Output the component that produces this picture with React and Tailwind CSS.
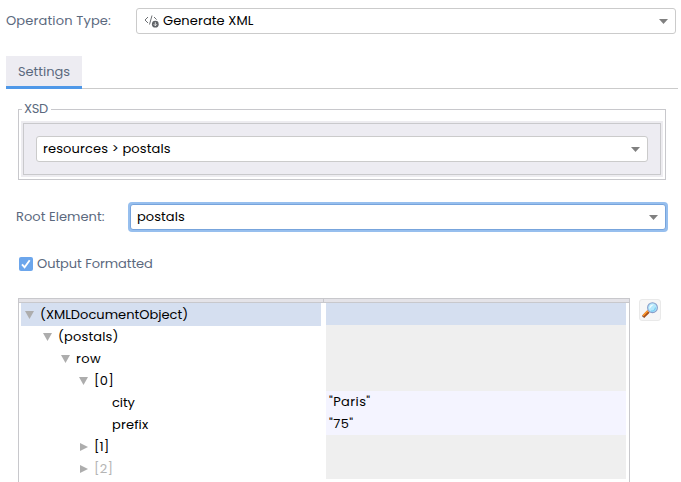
import React from 'react';

function Caret() {
  return (
    <svg className="mr-[7px] h-[5px] w-[9px] shrink-0" viewBox="0 0 9 5">
      <path d="M0 0h9L4.5 5z" fill="#808080" />
    </svg>
  );
}

function Combo({ className, children }) {
  return (
    <div className={'flex items-center justify-between rounded-[3px] border bg-white text-black ' + className}>
      <div className="flex items-center">{children}</div>
      <Caret />
    </div>
  );
}

function Arrow({ open }) {
  return (
    <svg className="mt-[2px] mr-[6px] h-[8px] w-[9px] shrink-0" viewBox="0 0 9 8">
      <path d={open ? 'M0 0h9L4.5 8z' : 'M1 0v8L9 4z'} fill="#adadad" />
    </svg>
  );
}

function XmlIcon() {
  return (
    <svg className="mr-[4px] h-[14px] w-[15px]" viewBox="0 0 15 14" fill="none" stroke="#6c6f73">
      <path d="M4 3 1 6l3 3M8 1.5 5.5 10.5M10 3l2.6 2.6" strokeWidth="1" />
      <circle cx="11.3" cy="10.2" r="3.4" fill="#606367" stroke="none" />
      <path d="M11.3 8.2v3.4M9.8 10.3l1.5 1.5 1.5-1.5" stroke="#fff" strokeWidth=".8" />
    </svg>
  );
}

function Magnifier() {
  return (
    <svg className="h-[16px] w-[16px]" viewBox="0 0 16 16">
      <path d="m1.3 14.7 5.2-5.2" stroke="#a84f18" strokeWidth="3.2" />
      <path d="m1 13.7 4.8-4.8" stroke="#ff9a2e" strokeWidth="1.5" />
      <path d="M.3 13.8 2.2 15.7" stroke="#6d4030" strokeWidth="1" />
      <circle cx="10.5" cy="5.7" r="4.9" fill="#b4e8fc" stroke="#8a9fca" strokeWidth="1.1" />
      <path d="M7.5 7C7 4 9 2 12 2.5 10 4 9 5 7.5 7z" fill="#effcff" />
      <path d="M9 9c2.5.5 4-1 4.5-3.5" stroke="#74cbf2" strokeWidth="1.2" fill="none" />
    </svg>
  );
}

const rows = [
  { label: '(XMLDocumentObject)', pad: 'pl-[4px]', text: 'tracking-[0.02px]', open: true, selected: true },
  { label: '(postals)', pad: 'pl-[22px]', text: 'tracking-[0.15px]', open: true },
  { label: 'row', pad: 'pl-[40px]', text: 'tracking-[0.4px]', open: true },
  { label: '[0]', pad: 'pl-[58px]', text: 'tracking-[0.3px]', open: true },
  { label: 'city', pad: 'pl-[91px]', text: 'tracking-[-0.1px]', leaf: true },
  { label: 'prefix', pad: 'pl-[91px]', text: 'tracking-[0.15px]', leaf: true },
  { label: '[1]', pad: 'pl-[58px]', text: 'tracking-[0px]', open: false },
  { label: '[2]', pad: 'pl-[58px]', text: 'tracking-[0.3px] text-[#b5b5b5]', open: false },
];

export default function App() {
  return (
    <div className="h-[482px] w-[681px] overflow-hidden bg-white font-['Poppins','Inter',sans-serif] text-[13px] leading-[20px] whitespace-nowrap text-[#5b697e]">
      <div className="flex items-center pt-[8px] pl-[6px]">
        <div className="w-[130px] tracking-[0.15px]">Operation Type:</div>
        <Combo className="h-[26px] w-[540px] border-[#cbcbcb] pl-[7px]">
          <XmlIcon />
          <span className="tracking-[0.1px]">Generate XML</span>
        </Combo>
      </div>

      <div className="mt-[22px] ml-[6px] flex h-[33px] w-[672px] items-end">
        <div className="flex h-[33px] w-[76px] items-center justify-center border-b-[3px] border-[#4f98e8] bg-[#edecf2] pt-[1px]">
          Settings
        </div>
        <div className="h-px flex-1 bg-[#cbcbcb]" />
      </div>

      <fieldset className="mt-[10px] ml-[18px] h-[81px] w-[648px] border border-[#c8c8cc] px-[2px]">
        <legend className="ml-[1px] h-[20px] pr-[3px] pl-[2px] tracking-[-0.4px]">XSD</legend>
        <div className="mt-[2px] h-[56px] w-[642px] bg-[#edecf0] p-[2px]">
          <div className="flex h-[52px] items-center border border-[#c9c9cc] bg-[#edecf2] pl-[12px]">
            <Combo className="h-[26px] w-[612px] border-[#cbcbcb] pl-[6px]">
              <span className="tracking-[0.13px]">{'resources > postals'}</span>
            </Combo>
          </div>
        </div>
      </fieldset>

      <div className="mt-[22px] ml-[16px] flex items-center">
        <div className="w-[112px] tracking-[0.05px]">Root Element:</div>
        <div className="h-[30px] w-[540px] rounded-[4px] bg-[#97bfee] p-[2px]">
          <Combo className="h-[26px] w-[536px] border-[#77a4dc] pl-[6px]">
            <span className="tracking-[0.05px]">postals</span>
          </Combo>
        </div>
      </div>

      <div className="mt-[22px] ml-[19px] flex h-[20px] items-center">
        <div className="mr-[4px] flex h-[14px] w-[14px] items-center justify-center rounded-[2px] bg-[#6ca6ec]">
          <svg className="h-[10px] w-[10px]" viewBox="0 0 10 10" fill="none" stroke="white" strokeWidth="1.9">
            <path d="m1 5.3 2.6 3L8.7 1.2" />
          </svg>
        </div>
        <span className="tracking-[-0.06px]">Output Formatted</span>
      </div>

      <div className="mt-[24px] ml-[18px] flex items-start">
        <div className="h-[184px] w-[612px] border border-b-0 border-[#c8c8cc]">
          <div className="flex h-[4px] border-b border-[#c8c8cc] bg-[#e4e3e8]">
            <div className="w-[305px] border-r border-[#c8c8cc]" />
          </div>
          <div className="flex pl-[2px] text-black">
            <div className="mr-[5px] w-[300px]">
              {rows.map((row) => (
                <div
                  key={row.label}
                  className={'flex h-[22px] items-center ' + row.pad + (row.selected ? ' bg-[#d5dff0] shadow-[0_1px_0_#d5dff0]' : '')}
                >
                  {!row.leaf && <Arrow open={row.open} />}
                  <span className={'pt-[1px] ' + row.text}>{row.label}</span>
                </div>
              ))}
            </div>
            <div className="h-[176px] w-[300px] bg-[#efefef]">
              <div className="h-[22px] bg-[#d5dff0]" />
              <div className="mt-[66px] h-[44px] bg-[#f4f4ff] pl-[3px] leading-[22px]">
                <div className="tracking-[0.4px]">"Paris"</div>
                <div className="tracking-[0.4px]">"75"</div>
              </div>
            </div>
          </div>
        </div>
        <div className="mt-[1px] ml-[9px] flex h-[22px] w-[22px] items-center justify-center rounded-[3px] border border-[#e9e9e9] bg-[#f6f6f6]">
          <Magnifier />
        </div>
      </div>
    </div>
  );
}
